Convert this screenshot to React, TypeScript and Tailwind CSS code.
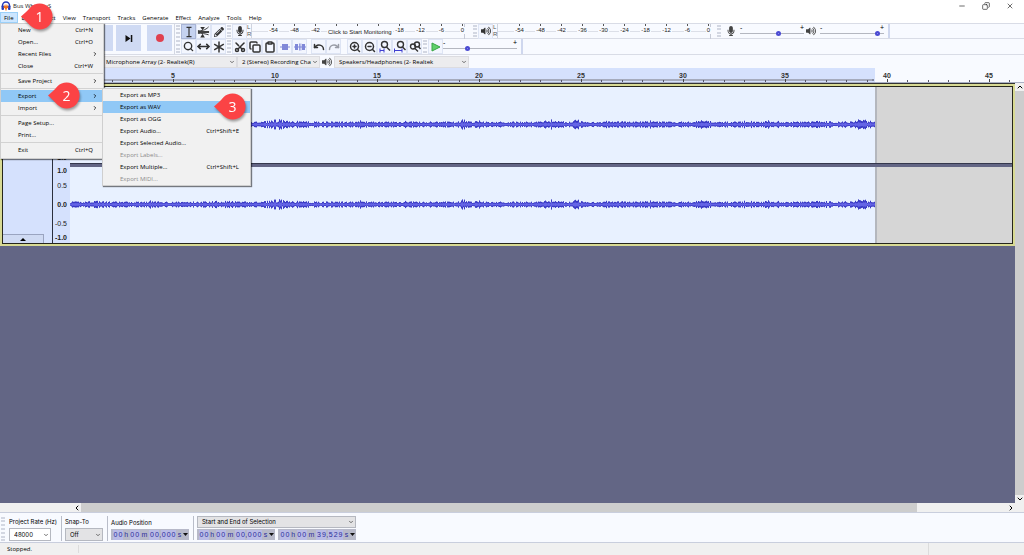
import { type ReactNode } from "react";
import clsx from "clsx";
import {
  Asterisk,
  ChevronDown,
  ChevronLeft,
  ChevronRight,
  ChevronUp,
  Clipboard,
  Copy,
  Minus,
  MoveHorizontal,
  Pause,
  Play,
  Redo,
  Scissors,
  Search,
  Square,
  Undo,
  X,
  ZoomIn,
  ZoomOut,
} from "lucide-react";
import { FaMicrophone, FaPencilAlt, FaVolumeUp } from "react-icons/fa";

type MenuEntry = {
  label: string;
  shortcut?: string;
  submenu?: boolean;
  disabled?: boolean;
  separator?: boolean;
  active?: boolean;
};

const menuBar = [
  "Edit",
  "Select",
  "View",
  "Transport",
  "Tracks",
  "Generate",
  "Effect",
  "Analyze",
  "Tools",
  "Help",
];

const fileMenu: MenuEntry[] = [
  { label: "New", shortcut: "Ctrl+N" },
  { label: "Open...", shortcut: "Ctrl+O" },
  { label: "Recent Files", submenu: true },
  { label: "Close", shortcut: "Ctrl+W" },
  { label: "Save Project", submenu: true, separator: true },
  { label: "Export", submenu: true, separator: true, active: true },
  { label: "Import", submenu: true },
  { label: "Page Setup...", separator: true },
  { label: "Print..." },
  { label: "Exit", shortcut: "Ctrl+Q", separator: true },
];

const exportMenu: MenuEntry[] = [
  { label: "Export as MP3" },
  { label: "Export as WAV", active: true },
  { label: "Export as OGG" },
  { label: "Export Audio...", shortcut: "Ctrl+Shift+E" },
  { label: "Export Selected Audio..." },
  { label: "Export Labels...", disabled: true },
  { label: "Export Multiple...", shortcut: "Ctrl+Shift+L" },
  { label: "Export MIDI...", disabled: true },
];

const Badge = ({ n, className }: { n: number; className: string }) => (
  <svg
    viewBox="0 0 36 30"
    className={clsx(
      "absolute z-30 w-[36px] h-[30px] drop-shadow-[1px_2px_1px_rgba(0,0,0,0.35)]",
      className
    )}
  >
    <path
      d="M1 14.5C5 11 8 8 10.500 5.200A13 13 0 1 1 10.500 23.800C8 21 5 18 1 14.500Z"
      fill="#fb4345"
    />
    <text
      x="19.500"
      y="19.500"
      textAnchor="middle"
      fill="#fff"
      fontSize="14"
      fontWeight="500"
      fontFamily="Open Sans, sans-serif"
    >
      {n}
    </text>
  </svg>
);

const Menu = ({
  items,
  className,
  itemClass,
}: {
  items: MenuEntry[];
  className: string;
  itemClass: string;
}) => (
  <ul
    className={clsx(
      "absolute z-20 bg-[#f1f1f1] border border-[#cfcfcf] shadow-[1px_1px_1px_rgba(0,0,0,0.5)]",
      className
    )}
  >
    {items.map((item) => (
      <li
        key={item.label}
        className={clsx(item.separator && "border-t border-[#d2d2d2] mt-px pt-px")}
      >
        <button
          disabled={item.disabled}
          className={clsx(
            "w-full h-3 flex items-center justify-between whitespace-nowrap",
            itemClass,
            item.active && "bg-[#90c8f6]",
            item.disabled ? "text-[#8c8c8c]" : "text-black"
          )}
        >
          <span>{item.label}</span>
          {item.shortcut && <span>{item.shortcut}</span>}
          {item.submenu && <ChevronRight className="w-1.5 h-1.5" strokeWidth={3} />}
        </button>
      </li>
    ))}
  </ul>
);

const Grip = () => (
  <div className="w-1 self-stretch my-px mx-px shrink-0 border-x-2 border-dotted border-[#d3d7e2]" />
);

const Tool = ({
  label,
  pressed,
  children,
}: {
  label: string;
  pressed?: boolean;
  children: ReactNode;
}) => (
  <button
    aria-label={label}
    className={clsx(
      "w-[15px] h-[15px] shrink-0 flex items-center justify-center border text-[#333]",
      pressed ? "bg-[#c5d2f0] border-[#a9b5d6]" : "bg-[#f3f6fe] border-[#dde4f4]"
    )}
  >
    {children}
  </button>
);

const Transport = ({ label, children }: { label: string; children: ReactNode }) => (
  <button
    aria-label={label}
    className="w-[25px] h-[26px] shrink-0 flex items-center justify-center bg-[#cfdaf3]"
  >
    {children}
  </button>
);

const Meter = ({ monitor }: { monitor?: boolean }) => (
  <div className="flex h-[15px] items-center text-[6px] leading-[7px] text-[#222]">
    <div className="w-[5px] border-r border-[#cfd3de] text-[#555]">
      <div>L</div>
      <div>R</div>
    </div>
    <div className="relative w-[213px] h-[15px] pl-[11px] flex border-r border-[#c6cad6]">
      <div className="absolute inset-x-0 top-1/2 h-px bg-[#dcdfe8]" />
      {[-54, -48, -42, -36, -30, -24, -18, -12, -6, 0].map((db) => {
        const covered = monitor && (db === -36 || db === -30 || db === -24);
        return (
          <div key={db} className="relative w-[21px] shrink-0 flex flex-col items-center">
            <div className="w-px h-0.5 bg-[#555]" />
            {!covered && <span className="mt-px bg-[#f8faff] px-px">{db}</span>}
          </div>
        );
      })}
      {monitor && (
        <button className="absolute left-[75px] top-1 px-px h-2 bg-[#f8faff] leading-[8px] whitespace-nowrap">
          Click to Start Monitoring
        </button>
      )}
    </div>
  </div>
);

const Slider = ({
  label,
  value,
  className,
}: {
  label: string;
  value: number;
  className: string;
}) => (
  <div className={clsx("relative h-[15px] flex items-end shrink-0", className)}>
    <span className="absolute left-0 top-0 text-[7px] leading-[7px]">-</span>
    <span className="absolute right-0 top-0 text-[7px] leading-[7px]">+</span>
    <input
      type="range"
      aria-label={label}
      defaultValue={value}
      className="w-full h-[5px] mb-[3px] appearance-none bg-transparent bg-[linear-gradient(#b4b7c0,#b4b7c0)] bg-[length:100%_1px] bg-center bg-no-repeat [&::-webkit-slider-thumb]:appearance-none [&::-webkit-slider-thumb]:w-[5px] [&::-webkit-slider-thumb]:h-[5px] [&::-webkit-slider-thumb]:rounded-full [&::-webkit-slider-thumb]:border-2 [&::-webkit-slider-thumb]:border-[#4a4ad2] [&::-webkit-slider-thumb]:bg-[#9a9af0]"
    />
  </div>
);

const Select = ({
  id,
  label,
  options,
  className,
}: {
  id: string;
  label?: string;
  options: string[];
  className: string;
}) => (
  <div className={clsx("relative shrink-0", className)}>
    <select
      id={id}
      aria-label={label}
      className="w-full h-full block appearance-none border border-inherit bg-inherit pl-1 pr-2 text-black"
    >
      {options.map((option) => (
        <option key={option}>{option}</option>
      ))}
    </select>
    <ChevronDown className="absolute right-0.5 top-1/2 -translate-y-1/2 w-1.5 h-1.5 text-[#444] pointer-events-none" strokeWidth={3} />
  </div>
);

// every digit and unit letter of a time box sits in a cell of its own
const TimeBox = ({ label, value }: { label: string; value: string }) => (
  <div
    role="group"
    aria-label={label}
    className="w-[78px] h-[11px] flex items-center bg-[#b7b9c9] pl-0.5 text-[7px] leading-[10px] text-[#2c2c9c] font-['Liberation_Sans',Arial,sans-serif]"
  >
    {value.split("").map((char, i) => (
      <span
        key={i}
        className={clsx(
          "text-center",
          char === "m" && "w-2.5",
          char === "," && "w-0.5",
          (char === "h" || char === "s") && "w-[7px]",
          /\d/.test(char) && "w-[5px] bg-[#b9bbe6]"
        )}
      >
        {char}
      </span>
    ))}
    <button aria-label={`${label} format`} className="ml-auto mr-px">
      <svg viewBox="0 0 5 3" className="w-[5px] h-[3px]">
        <path d="M0 0H5L2.500 3Z" fill="#111" />
      </svg>
    </button>
  </div>
);

// centre, width and gain of the louder passages
const bursts = [
  [24, 8, 1], [80, 5, 1], [150, 12, 1], [207, 9, 2], [231, 5, 1], [290, 4, 1],
  [338, 4, 1], [392, 4, 2], [407, 4, 2], [480, 9, 2], [506, 4, 2], [541, 10, 1],
  [580, 6, 1], [632, 10, 1], [676, 6, 1], [700, 9, 1], [752, 8, 1], [790, 10, 2],
];

const buildWave = (spread: number) => {
  let seed = 41;
  let d = "";
  for (let x = 0; x < 806; x++) {
    seed = (seed * 16807) % 2147483647;
    const noise = seed / 2147483647;
    const swell = bursts.reduce(
      (sum, [at, width, gain]) => sum + gain * Math.exp(-(((x - at) / width) ** 2)),
      0
    );
    const amp = (1.3 + noise * 1.8 + swell * (0.3 + noise * 0.9)) * spread;
    d += `M${x + 0.5} ${(37.5 - amp).toFixed(1)}V${(37.5 + amp).toFixed(1)}`;
  }
  return d;
};

const Channel = ({ labels }: { labels: [string, string][] }) => (
  <div className="flex h-[76px]">
    <div className="relative w-[17px] shrink-0 bg-[#d5e1fd] text-[7px] leading-[8px] text-[#222]">
      {labels.map(([text, place]) => (
        <span
          key={text}
          className={clsx("absolute right-[3px]", place, !text.includes("5") && "font-bold")}
        >
          {text}
        </span>
      ))}
    </div>
    <div className="w-[805px] shrink-0 bg-[#e8f1ff]">
      <svg viewBox="0 0 805 76" className="block w-[805px] h-[76px]">
        <path d={buildWave(1)} stroke="#3a3ac4" strokeWidth="1" />
        <path d={buildWave(0.45)} stroke="#6464e6" strokeWidth="1" />
      </svg>
    </div>
    <div className="grow bg-[#d6d6d6] border-l-2 border-[#b4b7bd]" />
  </div>
);

const scale: [string, string][] = [
  ["1.0", "top-0"],
  ["0.5", "top-[15px]"],
  ["0.0", "top-[34px]"],
  ["-0.5", "top-[53px]"],
  ["-1.0", "top-[67px]"],
];

const Timeline = () => (
  <div className="flex h-[15px] shrink-0 overflow-hidden bg-[#f8faff] border-b border-[#a9b0c4]">
    <div className="w-[71px] shrink-0 bg-[#d5e1fd]" />
    <div className="relative grow flex bg-[linear-gradient(to_right,#d5e1fd_804px,#f8faff_804px)]">
      <div className="absolute left-0 top-[11px] w-[803px] h-0.5 bg-[#a5abbd] border-r-2 border-[#858b9f]" />
      {[0, 5, 10, 15, 20, 25, 30, 35, 40, 45].map((second) => (
        <div key={second} className="relative w-[102px] shrink-0 flex items-end">
          <span className="absolute left-0 top-1 -translate-x-1/2 text-[7px] leading-[8px] font-bold text-[#333]">
            {second}
          </span>
          <div className="w-px h-[3px] bg-[#444]" />
          {[1, 2, 3, 4].map((tick) => (
            <div key={tick} className="grow flex justify-end">
              <div className="w-px h-0.5 bg-[#556]" />
            </div>
          ))}
          <div className="grow" />
        </div>
      ))}
    </div>
  </div>
);

export default function App() {
  return (
    <div className="h-screen min-w-[1024px] flex flex-col bg-white overflow-hidden cursor-default text-[6px] leading-[8px] text-black font-['Open_Sans','Noto_Sans',sans-serif]">
      <header className="h-3 shrink-0 flex items-center pl-px text-[#222]">
        <svg viewBox="0 0 20 20" className="w-2.5 h-2.5">
          <path d="M3 12V9a7 7 0 0 1 14 0v3" fill="none" stroke="#2638b8" strokeWidth="3" />
          <rect x="1" y="9" width="5" height="9" rx="2" fill="#2638b8" />
          <rect x="14" y="9" width="5" height="9" rx="2" fill="#2638b8" />
          <path d="M6 14l2-4 2 6 2-6 2 4" fill="none" stroke="#f0701c" strokeWidth="3" />
        </svg>
        <h1 className="ml-0.5">Bus Whine uS</h1>
        <div className="ml-auto flex gap-4 pr-2.5">
          <button aria-label="Minimize">
            <Minus className="w-2 h-2" />
          </button>
          <button aria-label="Restore">
            <Copy className="w-2 h-2 -scale-x-100" />
          </button>
          <button aria-label="Close">
            <X className="w-2 h-2" />
          </button>
        </div>
      </header>

      <nav className="relative h-[11px] shrink-0 flex items-center gap-px">
        <button className="h-[11px] px-[3px] bg-[#cce6ff] border border-[#9bd0f8]">File</button>
        {menuBar.map((name) => (
          <button key={name} className="px-[3px]">
            {name}
          </button>
        ))}
        <Menu
          items={fileMenu}
          className="left-0 top-[11px] w-[104px] pb-0.5"
          itemClass="pl-[17px] pr-[5px] [&>span+span]:pr-[5px]"
        />
        <Menu
          items={exportMenu}
          className="left-[102px] top-[76px] w-[149px]"
          itemClass="pl-[17px] pr-[11px]"
        />
        <Badge n={1} className="left-5 top-[-10px]" />
        <Badge n={2} className="left-[47px] top-[69px]" />
        <Badge n={3} className="left-[213px] top-[80px]" />
      </nav>

      <section className="shrink-0 flex bg-[#f8faff] font-['Liberation_Sans',Arial,sans-serif]">
        <div className="w-[175px] shrink-0 flex items-start pt-px border-t border-r border-[#d3d7e2]">
          <div className="flex gap-[3px] pl-1">
            <Transport label="Pause">
              <Pause className="w-3 h-3" />
            </Transport>
            <Transport label="Play">
              <Play className="w-3 h-3 fill-green-500 text-green-600" />
            </Transport>
            <Transport label="Stop">
              <Square className="w-2.5 h-2.5 fill-black" />
            </Transport>
            <Transport label="Skip to start">
              <ChevronLeft className="w-3 h-3" />
            </Transport>
            <Transport label="Skip to end">
              <svg viewBox="0 0 8 7" className="w-2 h-[7px]">
                <path d="M0.500 0L5.500 3.500L0.500 7ZM5.800 0H7.300V7H5.800Z" fill="#111" />
              </svg>
            </Transport>
          </div>
          <div className="ml-1.5">
            <Transport label="Record">
              <div className="w-2 h-2 rounded-full bg-[#e0414f]" />
            </Transport>
          </div>
        </div>

        <div className="flex items-center border-t border-[#d3d7e2]">
          <Grip />
          <div className="grid grid-cols-3">
            <Tool label="Selection" pressed>
              <svg viewBox="0 0 12 14" className="w-2.5 h-3" fill="none" stroke="#333" strokeWidth="1.400">
                <path d="M3 1.500H9M3 12.500H9M6 1.500V12.500" />
              </svg>
            </Tool>
            <Tool label="Envelope">
              <svg viewBox="0 0 14 14" className="w-3.5 h-3.5" fill="none" stroke="#333">
                <path d="M1 7H13" strokeWidth="2" />
                <path d="M1 5.500C5 6 9 5 12.500 1.500M1 8.500C5 8 9 9 12.500 10" strokeWidth="1" />
                <path d="M3.500 1.500H8.500L6 5ZM3.500 13H8.500L6 9Z" fill="#333" strokeWidth="0" />
              </svg>
            </Tool>
            <Tool label="Draw">
              <FaPencilAlt className="w-2.5 h-2.5" />
            </Tool>
            <Tool label="Zoom">
              <Search className="w-[11px] h-[11px]" strokeWidth={3} />
            </Tool>
            <Tool label="Time shift">
              <MoveHorizontal className="w-[13px] h-[13px]" strokeWidth={3} />
            </Tool>
            <Tool label="Multi-tool">
              <svg viewBox="0 0 12 12" className="w-3 h-3" stroke="#333" strokeWidth="1.500">
                <path d="M6 0.500V11.500M1.200 3.200L10.800 8.800M10.800 3.200L1.200 8.800" />
              </svg>
            </Tool>
          </div>
        </div>

        <div className="grow">
          <div className="h-[15px] flex items-center border-t border-[#d9dce6]">
            <Grip />
            <Tool label="Record meter">
              <FaMicrophone className="w-2.5 h-2.5" />
            </Tool>
            <Meter monitor />
            <div className="w-[7px]" />
            <Grip />
            <Tool label="Playback meter">
              <FaVolumeUp className="w-2.5 h-2.5" />
            </Tool>
            <Meter />
            <div className="w-[3px] ml-0.5 border-l border-[#c6cad6]" />
            <Grip />
            <FaMicrophone className="w-2.5 h-2.5 ml-1 mr-1 text-[#444]" />
            <Slider label="Recording volume" value={61} className="w-16" />
            <FaVolumeUp className="w-2.5 h-2.5 ml-0.5 mr-1 text-[#444]" />
            <Slider label="Playback volume" value={94} className="w-16" />
            <div className="w-0.5 ml-1 self-stretch bg-[#cfd7ee]" />
          </div>
          <div className="h-4 flex items-center border-t border-[#d9dce6]">
            <Grip />
            <Tool label="Cut">
              <Scissors className="w-3 h-3 rotate-90 -scale-x-100" strokeWidth={3} />
            </Tool>
            <Tool label="Copy">
              <Copy className="w-3 h-3" strokeWidth={3} />
            </Tool>
            <Tool label="Paste">
              <Clipboard className="w-3 h-3" strokeWidth={3} />
            </Tool>
            <Tool label="Trim">
              <svg viewBox="0 0 12 10" className="w-3 h-2.5" fill="#8088d8">
                <path d="M3 2H9V8H3ZM1 4.500H11V5.500H1Z" />
              </svg>
            </Tool>
            <Tool label="Silence">
              <svg viewBox="0 0 12 10" className="w-3 h-2.5" fill="#8088d8">
                <path d="M1 2H4V8H1ZM8 2H11V8H8ZM0 4.500H12V5.500H0ZM5 1.500H5.800V8.500H5ZM6.500 1.500H7.300V8.500H6.500Z" />
              </svg>
            </Tool>
            <div className="w-1" />
            <Tool label="Undo">
              <Undo className="w-3 h-3" strokeWidth={3} />
            </Tool>
            <Tool label="Redo">
              <Redo className="w-3 h-3 text-[#9a9da6]" strokeWidth={3} />
            </Tool>
            <div className="w-1.5" />
            <Tool label="Zoom in">
              <ZoomIn className="w-3 h-3" strokeWidth={3} />
            </Tool>
            <Tool label="Zoom out">
              <ZoomOut className="w-3 h-3" strokeWidth={3} />
            </Tool>
            <Tool label="Zoom to selection">
              <svg viewBox="0 0 12 13" className="w-3 h-[13px]" fill="none" stroke="#333" strokeWidth="1.400">
                <circle cx="5.500" cy="4.500" r="3" />
                <path d="M7.500 7L11 10.500" />
                <path d="M1 10.500H5M1 8.500V12.500M5 8.500V12.500" stroke="#3f3fd0" strokeWidth="1" />
              </svg>
            </Tool>
            <Tool label="Fit project">
              <svg viewBox="0 0 12 13" className="w-3 h-[13px]" fill="none" stroke="#333" strokeWidth="1.400">
                <circle cx="6.500" cy="4.500" r="3" />
                <path d="M8.500 7L11.500 10" />
                <path d="M0.500 10.500H8M0.500 8.500V12.500M8 8.500V12.500" stroke="#3f3fd0" strokeWidth="1" />
              </svg>
            </Tool>
            <Tool label="Zoom toggle">
              <svg viewBox="0 0 12 13" className="w-3 h-[13px]" fill="none" stroke="#333" strokeWidth="1.400">
                <circle cx="4" cy="6.500" r="2.500" />
                <circle cx="8" cy="4.500" r="2.500" />
                <path d="M6 8.500L9 11.500M9.500 6.500L11.500 9" />
              </svg>
            </Tool>
            <Grip />
            <Tool label="Play at speed">
              <svg viewBox="0 0 10 10" className="w-2.5 h-2.5">
                <path d="M1 1L9 5L1 9Z" fill="#5fd06a" stroke="#38a545" />
              </svg>
            </Tool>
            <Slider label="Playback speed" value={32} className="w-[74px]" />
            <div className="w-0.5 ml-1 self-stretch bg-[#cfd7ee]" />
          </div>
        </div>
      </section>

      <section className="h-[14px] shrink-0 flex items-center border-t border-[#d9dce6] bg-[#f8faff]">
        <div className="w-[101px] shrink-0 flex">
          <Grip />
        </div>
        <Select
          id="input-device"
          label="Recording device"
          options={["Microphone Array (2- Realtek(R)"]}
          className="w-[136px] h-3 bg-[#ececee] border-[#dcdce0]"
        />
        <Select
          id="channels"
          label="Recording channels"
          options={["2 (Stereo) Recording Channels"]}
          className="w-[83px] h-3 bg-[#ececee] border-[#dcdce0]"
        />
        <FaVolumeUp className="w-2.5 h-2.5 mx-0.5 text-[#444]" />
        <Select
          id="output-device"
          label="Playback device"
          options={["Speakers/Headphones (2- Realtek"]}
          className="w-[135px] h-3 bg-[#ececee] border-[#dcdce0]"
        />
      </section>

      <main className="grow min-h-0 flex flex-col font-['Liberation_Sans',Arial,sans-serif]">
        <Timeline />
        <div className="grow min-h-0 flex">
          <div className="grow bg-[#636685]">
            <div className="border-t border-[#333] bg-[#d8da94] pt-0.5 px-0.5 pb-0.5">
              <div className="flex border border-[#26261c] bg-[#d5e1fd]">
                <div className="w-[50px] shrink-0 flex items-end border-r border-[#2b2f3d]">
                  <button
                    aria-label="Collapse track"
                    className="w-[41px] h-[9px] flex items-center justify-center bg-[#cfdaf3] border-t border-r border-[#9aa4c0]"
                  >
                    <svg viewBox="0 0 6 3" className="w-1.5 h-[3px]">
                      <path d="M3 0L6 3H0Z" fill="#000" />
                    </svg>
                  </button>
                </div>
                <div className="grow">
                  <Channel labels={scale} />
                  <div className="h-1 ml-[17px] bg-[#636685] border-t border-[#35384d]" />
                  <Channel labels={scale} />
                </div>
              </div>
            </div>
          </div>
          <div className="w-[9px] shrink-0 flex flex-col items-center bg-[#f0f0f0]">
            <ChevronUp className="w-2 h-2 shrink-0" strokeWidth={3} />
            <div className="grow w-full bg-[#cdcdcd]" />
            <ChevronDown className="w-2 h-2 shrink-0" strokeWidth={3} />
          </div>
        </div>
        <div className="h-[9px] shrink-0 flex items-center bg-[#f0f0f0] pr-[9px]">
          <ChevronLeft className="w-2 h-2 ml-[73px]" strokeWidth={3} />
          <div className="w-[836px] h-full bg-[#cdcdcd]" />
          <ChevronRight className="w-2 h-2 ml-auto" strokeWidth={3} />
        </div>
      </main>

      <section className="h-[31px] shrink-0 flex items-start gap-[3px] border-y border-[#c9cedd] bg-[#f8faff] pt-[3px] font-['Inter','Liberation_Sans',sans-serif]">
        <div className="flex h-[26px]">
          <Grip />
        </div>
        <div className="w-[53px] border-r border-[#b9bdc9]">
          <label htmlFor="rate" className="h-3 flex items-center whitespace-nowrap">
            Project Rate (Hz)
          </label>
          <Select id="rate" options={["48000"]} className="w-[42px] h-[13px] bg-white border-[#b5b8c0]" />
        </div>
        <div className="w-[43px] border-r border-[#b9bdc9]">
          <label htmlFor="snap" className="h-3 flex items-center">
            Snap-To
          </label>
          <Select id="snap" options={["Off"]} className="w-[38px] h-[13px] bg-[#e3e3e5] border-[#b5b8c0]" />
        </div>
        <div className="w-[83px] border-r border-[#b9bdc9]">
          <h2 className="h-[13px] flex items-center">Audio Position</h2>
          <TimeBox label="Audio Position" value="00h00m00,000s" />
        </div>
        <div>
          <Select
            id="selection-mode"
            label="Selection mode"
            options={["Start and End of Selection"]}
            className="w-[159px] h-3 bg-[#e3e3e5] border-[#b5b8c0]"
          />
          <div className="flex gap-[3px] mt-px">
            <TimeBox label="Selection start" value="00h00m00,000s" />
            <TimeBox label="Selection end" value="00h00m39,529s" />
          </div>
        </div>
      </section>

      <footer className="h-3 shrink-0 flex items-center bg-[#f0f0f0]">
        <div className="w-[79px] pl-[7px] border-r border-[#dcdcdc]">Stopped.</div>
        <div className="grow self-stretch" />
        <div className="w-24 self-stretch border-l border-[#dcdcdc]" />
      </footer>
    </div>
  );
}
